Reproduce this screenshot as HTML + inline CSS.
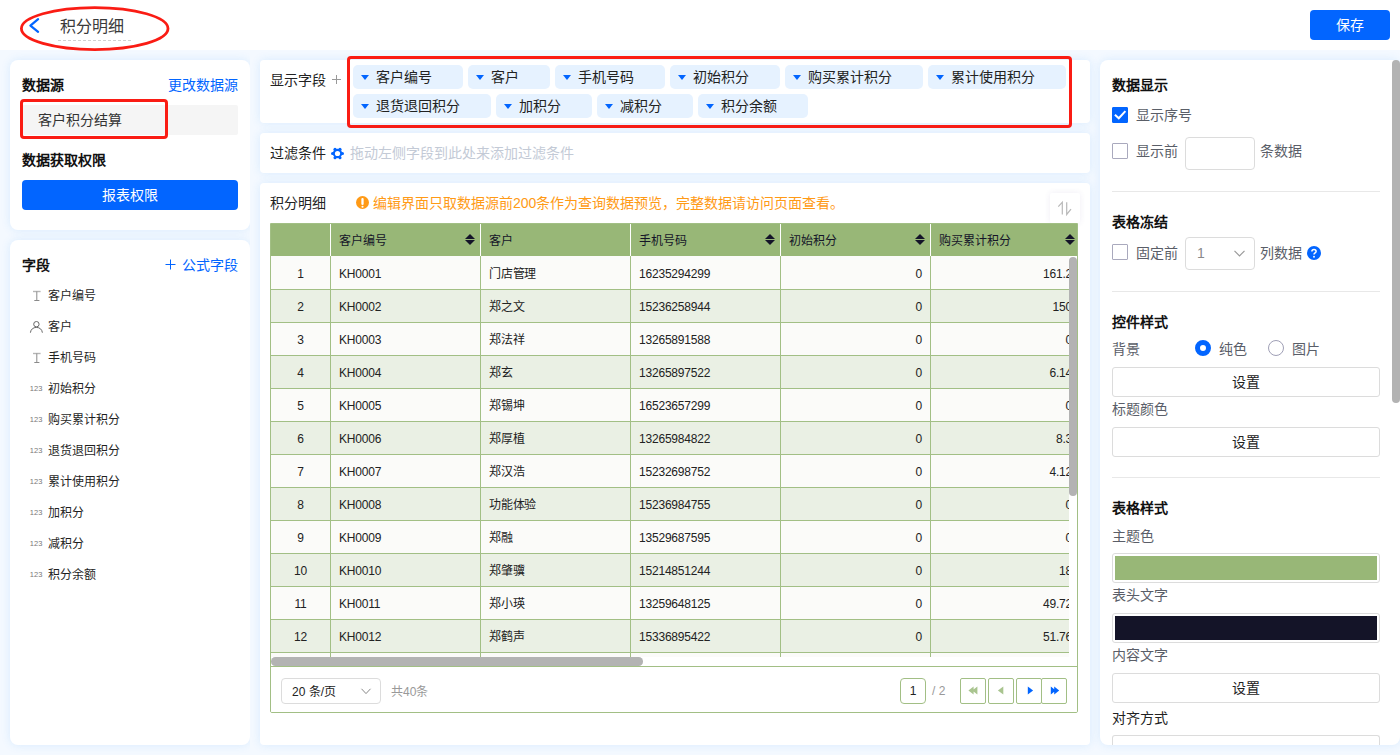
<!DOCTYPE html>
<html lang="zh-CN">
<head>
<meta charset="utf-8">
<title>积分明细</title>
<style>
*{box-sizing:border-box;margin:0;padding:0}
html,body{width:1400px;height:755px;overflow:hidden}
body{font-family:"Liberation Sans",sans-serif;font-size:14px;color:#1f1f1f;background:#f4f9ff;position:relative}
.a{position:absolute;white-space:nowrap}
.card{position:absolute;background:#fff;border-radius:8px;box-shadow:0 0 10px rgba(50,150,250,0.14)}
.lc{clip-path:inset(-20px 0 -20px -20px)}
.pan{position:absolute;background:#fff;border-radius:4px;box-shadow:0 0 10px rgba(50,150,250,0.14)}
.b{font-weight:bold;color:#111}
.blue{color:#0265ff}
.t14{font-size:14px;line-height:20px;height:20px}
.t12{font-size:12px;line-height:18px;height:18px}
svg{position:absolute;overflow:visible}
i{font-style:normal}
#hdr{left:0;top:0;width:1400px;height:50px;background:#fff;z-index:2}
.z3{z-index:3}
#save{left:1310px;top:10px;width:80px;height:30px;background:#0265ff;border-radius:4px;color:#fff;text-align:center;line-height:30px;font-size:14px}
.red{position:absolute;border:3px solid #fa1c14;border-radius:4px}
.fld{left:48px;font-size:12px;line-height:18px;height:18px;color:#1f1f1f}
.n123{left:29.8px;font-size:7.5px;line-height:10px;height:10px;color:#777;letter-spacing:0.1px}
.chip{position:absolute;height:24px;background:#e6f2ff;border-radius:5px;font-size:14px;line-height:24px;padding-left:23px;color:#222;white-space:nowrap;overflow:hidden}
.chip:before{content:"";position:absolute;left:8px;top:10px;border-left:4.5px solid transparent;border-right:4.5px solid transparent;border-top:5px solid #0265ff}
#tbl{left:270px;top:223px;width:808px;height:490px;border:1px solid #a2bf85;border-radius:0 0 2px 2px;overflow:hidden;background:#fff}
.th{position:absolute;top:-1px;height:33px;background:#98b777;font-size:12px;line-height:37px;color:#141428;padding-left:8px;white-space:nowrap;border-left:1px solid #fff;overflow:hidden}
.row{position:absolute;left:0;width:798px;height:33px;border-bottom:1px solid #a2bf85;background:#fbfbf9;font-size:12px;line-height:34px;color:#222;overflow:hidden;letter-spacing:-0.2px}
.row.e{background:#eaf0e4}
.row span{position:absolute;top:0;bottom:0;border-left:1px solid #a2bf85;padding:0 8px;white-space:nowrap;overflow:hidden}
.row span.c0{left:0;width:59px;border-left:0;text-align:center;padding:0}
.row span.c1{left:59px;width:150px}
.row span.c2{left:209px;width:150px}
.row span.c3{left:359px;width:150px}
.row span.c4{left:509px;width:150px;text-align:right}
.row span.c5{left:659px;width:150px;text-align:right}
.sort{position:absolute;right:5px;top:10.5px;width:10px;height:12px}
.sort:before{content:"";position:absolute;left:0;top:0;border-left:5px solid transparent;border-right:5px solid transparent;border-bottom:5.5px solid #141428}
.sort:after{content:"";position:absolute;left:0;top:6.5px;border-left:5px solid transparent;border-right:5px solid transparent;border-top:5.5px solid #141428}
.pg{position:absolute;top:454px;width:26px;height:26px;border:1px solid #a2bf85;background:#fff;border-radius:2px}
.g{color:#5a5e68}
.cb{position:absolute;left:1112px;width:16px;height:16px;border:1px solid #a9a9bd;background:#fff;border-radius:1px}
.btn{position:absolute;left:1112px;width:268px;height:30px;border:1px solid #dcdcdc;border-radius:3px;background:#fff;text-align:center;line-height:28px;font-size:14px;color:#222}
.hr{position:absolute;left:1112px;width:268px;height:1px;background:#e8e8e8}
.inp{position:absolute;left:1185px;width:70px;height:33px;border:1px solid #dcdcdc;border-radius:4px;background:#fff}
.sw{position:absolute;left:1112px;width:268px;height:30px;border:1px solid #dcdcdc;border-radius:3px;background:#fff;padding:2px}
.sw i{display:block;width:100%;height:100%}

</style>
</head>
<body>
<!-- HEADER -->
<div class="a" id="hdr"></div>
<svg class="z3" style="left:0;top:0" width="200" height="60"><polyline points="38.1,19.2 30.4,25.55 38.1,31.9" fill="none" stroke="#0265ff" stroke-width="2.2" stroke-linecap="round" stroke-linejoin="round"/><line x1="58" y1="40.5" x2="131" y2="40.5" stroke="#d0d0d0" stroke-width="1" stroke-dasharray="3,2"/><ellipse cx="94.7" cy="28.6" rx="73.3" ry="21" fill="none" stroke="#fa1c14" stroke-width="2.8"/></svg>
<div class="a z3" style="left:60px;top:15px;font-size:16px;line-height:24px;color:#3a3a3a">积分明细</div>
<div class="a z3" id="save">保存</div>

<!-- LEFT CARD 1 -->
<div class="card lc" style="left:10px;top:60px;width:240px;height:170px"></div>
<div class="a t14 b" style="left:22px;top:75px">数据源</div>
<div class="a t14 blue" style="right:1162px;top:75px">更改数据源</div>
<div class="a" style="left:22px;top:105px;width:216px;height:30px;background:#f5f5f5;border-radius:2px;padding-left:16px;line-height:30px;color:#333">客户积分结算</div>
<div class="red" style="left:19.5px;top:98.5px;width:148.5px;height:40.5px"></div>
<div class="a t14 b" style="left:22px;top:150px">数据获取权限</div>
<div class="a" style="left:22px;top:180px;width:216px;height:30px;background:#0265ff;border-radius:4px;color:#fff;text-align:center;line-height:30px">报表权限</div>

<!-- LEFT CARD 2 -->
<div class="card lc" style="left:10px;top:240px;width:240px;height:505px"></div>
<div class="a t14 b" style="left:22px;top:255px">字段</div>
<div class="a t14 blue" style="right:1162px;top:255px">公式字段</div>
<svg style="left:165px;top:259px" width="12" height="12"><path d="M5.5 0.5v10M0.5 5.5h10" stroke="#0265ff" stroke-width="1" fill="none"/></svg>
<div class="a fld" style="top:287px">客户编号</div>
<svg style="left:32.8px;top:291.1px" width="8" height="11"><path d="M0 0.5h7.6" stroke="#b5b5b5" stroke-width="1.4" fill="none"/><path d="M3.8 0.5v9M1.3 9.5h5.1" stroke="#8a8a8a" stroke-width="1" fill="none"/></svg>
<div class="a fld" style="top:318px">客户</div>
<svg style="left:30px;top:321px" width="12" height="12"><circle cx="6.4" cy="3.2" r="2.7" fill="none" stroke="#666" stroke-width="1"/><path d="M0.4 11.7c0.4-3.4 2.8-5.3 6-5.3s5.6 1.9 6 5.3" fill="none" stroke="#666" stroke-width="1"/></svg>
<div class="a fld" style="top:349px">手机号码</div>
<svg style="left:32.8px;top:353.1px" width="8" height="11"><path d="M0 0.5h7.6" stroke="#b5b5b5" stroke-width="1.4" fill="none"/><path d="M3.8 0.5v9M1.3 9.5h5.1" stroke="#8a8a8a" stroke-width="1" fill="none"/></svg>
<div class="a fld" style="top:380px">初始积分</div>
<div class="a n123" style="top:384px">123</div>
<div class="a fld" style="top:411px">购买累计积分</div>
<div class="a n123" style="top:415px">123</div>
<div class="a fld" style="top:442px">退货退回积分</div>
<div class="a n123" style="top:446px">123</div>
<div class="a fld" style="top:473px">累计使用积分</div>
<div class="a n123" style="top:477px">123</div>
<div class="a fld" style="top:504px">加积分</div>
<div class="a n123" style="top:508px">123</div>
<div class="a fld" style="top:535px">减积分</div>
<div class="a n123" style="top:539px">123</div>
<div class="a fld" style="top:566px">积分余额</div>
<div class="a n123" style="top:570px">123</div>

<!-- MIDDLE: display fields -->
<div class="pan" style="left:260px;top:60px;width:830px;height:63px"></div>
<div class="a t14" style="left:270px;top:70px;color:#222">显示字段</div>
<svg style="left:332px;top:75px" width="10" height="10"><path d="M4.5 0v9M0 4.5h9" stroke="#999" stroke-width="1" fill="none"/></svg>
<div class="chip" style="left:353px;top:65px;width:110px">客户编号</div>
<div class="chip" style="left:468px;top:65px;width:82px">客户</div>
<div class="chip" style="left:555px;top:65px;width:110px">手机号码</div>
<div class="chip" style="left:670px;top:65px;width:110px">初始积分</div>
<div class="chip" style="left:785px;top:65px;width:138px">购买累计积分</div>
<div class="chip" style="left:928px;top:65px;width:138px">累计使用积分</div>
<div class="chip" style="left:353px;top:94px;width:138px">退货退回积分</div>
<div class="chip" style="left:496px;top:94px;width:96px">加积分</div>
<div class="chip" style="left:597px;top:94px;width:96px">减积分</div>
<div class="chip" style="left:698px;top:94px;width:110px">积分余额</div>
<div class="red" style="left:347px;top:55.5px;width:725px;height:72px"></div>

<!-- MIDDLE: filter -->
<div class="pan" style="left:260px;top:133px;width:830px;height:40px"></div>
<div class="a t14" style="left:270px;top:143px;color:#222">过滤条件</div>
<svg style="left:331px;top:146.7px" width="13" height="13" viewBox="0 0 13 13"><g fill="#0265ff"><circle cx="6.5" cy="6.5" r="4.7"/><circle cx="11.45" cy="6.50" r="1.55"/><circle cx="8.98" cy="10.79" r="1.55"/><circle cx="4.03" cy="10.79" r="1.55"/><circle cx="1.55" cy="6.50" r="1.55"/><circle cx="4.02" cy="2.21" r="1.55"/><circle cx="8.98" cy="2.21" r="1.55"/></g><circle cx="6.5" cy="6.5" r="2.6" fill="#fff"/></svg>
<div class="a t14" style="left:350px;top:143px;color:#c3cad6">拖动左侧字段到此处来添加过滤条件</div>

<!-- MIDDLE: table panel -->
<div class="pan" style="left:260px;top:183px;width:830px;height:562px"></div>
<div class="a t14" style="left:270px;top:193px;color:#222">积分明细</div>
<svg style="left:356.2px;top:196.1px" width="13" height="13" viewBox="0 0 13 13"><circle cx="6.5" cy="6.5" r="6.5" fill="#ff9a16"/><rect x="5.35" y="2" width="2.3" height="6.9" rx="1" fill="#fff"/><circle cx="6.5" cy="10.7" r="1.05" fill="#fff"/></svg>
<div class="a" style="left:373px;top:193px;font-size:14px;line-height:20px;color:#ff9a16">编辑界面只取数据源前200条作为查询数据预览，完整数据请访问页面查看。</div>
<div class="a" style="left:1050px;top:193px;width:30px;height:30px;background:#fff;border-radius:2px;box-shadow:0 0 6px rgba(80,60,140,0.09)"></div>
<svg style="left:1050px;top:193px" width="30" height="30"><path d="M12.3 21.5V9.2L8.3 13.6M16.7 9.2V21.5L21 16.2" fill="none" stroke="#b8b8b8" stroke-width="1.2"/></svg>
<div class="a" id="tbl">
<div class="th" style="left:-1px;width:60px;border-left:0"></div>
<div class="th" style="left:59px;width:150px">客户编号<i class="sort"></i></div>
<div class="th" style="left:209px;width:150px">客户</div>
<div class="th" style="left:359px;width:150px">手机号码<i class="sort"></i></div>
<div class="th" style="left:509px;width:150px">初始积分<i class="sort"></i></div>
<div class="th" style="left:659px;width:150px">购买累计积分<i class="sort"></i></div>
<div class="row" style="top:32px;height:34px;line-height:36px"><span class="c0">1</span><span class="c1">KH0001</span><span class="c2">门店管理</span><span class="c3">16235294299</span><span class="c4">0</span><span class="c5">161.2</span></div>
<div class="row e" style="top:66px"><span class="c0">2</span><span class="c1">KH0002</span><span class="c2">郑之文</span><span class="c3">15236258944</span><span class="c4">0</span><span class="c5">150</span></div>
<div class="row" style="top:99px"><span class="c0">3</span><span class="c1">KH0003</span><span class="c2">郑法祥</span><span class="c3">13265891588</span><span class="c4">0</span><span class="c5">0</span></div>
<div class="row e" style="top:132px"><span class="c0">4</span><span class="c1">KH0004</span><span class="c2">郑玄</span><span class="c3">13265897522</span><span class="c4">0</span><span class="c5">6.14</span></div>
<div class="row" style="top:165px"><span class="c0">5</span><span class="c1">KH0005</span><span class="c2">郑锡坤</span><span class="c3">16523657299</span><span class="c4">0</span><span class="c5">0</span></div>
<div class="row e" style="top:198px"><span class="c0">6</span><span class="c1">KH0006</span><span class="c2">郑厚植</span><span class="c3">13265984822</span><span class="c4">0</span><span class="c5">8.3</span></div>
<div class="row" style="top:231px"><span class="c0">7</span><span class="c1">KH0007</span><span class="c2">郑汉浩</span><span class="c3">15232698752</span><span class="c4">0</span><span class="c5">4.12</span></div>
<div class="row e" style="top:264px"><span class="c0">8</span><span class="c1">KH0008</span><span class="c2">功能体验</span><span class="c3">15236984755</span><span class="c4">0</span><span class="c5">0</span></div>
<div class="row" style="top:297px"><span class="c0">9</span><span class="c1">KH0009</span><span class="c2">郑融</span><span class="c3">13529687595</span><span class="c4">0</span><span class="c5">0</span></div>
<div class="row e" style="top:330px"><span class="c0">10</span><span class="c1">KH0010</span><span class="c2">郑肇骥</span><span class="c3">15214851244</span><span class="c4">0</span><span class="c5">18</span></div>
<div class="row" style="top:363px"><span class="c0">11</span><span class="c1">KH0011</span><span class="c2">郑小瑛</span><span class="c3">13259648125</span><span class="c4">0</span><span class="c5">49.72</span></div>
<div class="row e" style="top:396px"><span class="c0">12</span><span class="c1">KH0012</span><span class="c2">郑鹤声</span><span class="c3">15336895422</span><span class="c4">0</span><span class="c5">51.76</span></div>
<div class="row" style="top:429px"><span class="c0">13</span><span class="c1">KH0013</span><span class="c2">郑天挺</span><span class="c3">13265984711</span><span class="c4">0</span><span class="c5">12.5</span></div>
<div class="a" style="left:798px;top:32px;width:8px;height:401px;background:#fff"></div>
<div class="a" style="left:798px;top:33px;width:7.7px;height:238.6px;background:#b3b3b3;border-radius:4px"></div>
<div class="a" style="left:0;top:433px;width:806px;height:56px;background:#fff"></div>
<div class="a" style="left:0;top:433px;width:372px;height:8.6px;background:#b3b3b3;border-radius:4.3px"></div>
<div class="a" style="left:0;top:442px;width:806px;height:1px;background:#a2bf85"></div>
<div class="a" style="left:10px;top:454px;width:100px;height:26px;border:1px solid #dcdcdc;border-radius:4px;padding-left:10px;font-size:12px;line-height:26px;color:#222">20 条/页</div>
<svg style="left:90px;top:464px" width="10" height="7"><path d="M0.5 0.8L5 5.6L9.5 0.8" fill="none" stroke="#888" stroke-width="1"/></svg>
<div class="a" style="left:120px;top:454px;font-size:12px;line-height:29px;color:#999">共40条</div>
<div class="pg" style="left:629px;border-radius:4px;text-align:center;font-size:12px;line-height:24px;color:#222">1</div>
<div class="a" style="left:661px;top:454px;font-size:12px;line-height:26px;color:#999">/ 2</div>
<div class="pg" style="left:689px"></div>
<div class="pg" style="left:717px"></div>
<div class="pg" style="left:745px"></div>
<div class="pg" style="left:770px"></div>
<svg style="left:689px;top:454px" width="110" height="26"><path d="M13.6 8.5v8l-5.2-4zM17.4 8.5v8l-5.2-4z" fill="#a9c48f"/><path d="M43.3 8.5v8l-5.4-4z" fill="#a9c48f"/><path d="M67.8 8.5v8l5.3-4z" fill="#0265ff"/><path d="M90.8 8.5v8l5-4zM94.2 8.5v8l5-4z" fill="#0265ff"/></svg>
</div>

<!-- RIGHT PANEL -->
<div class="card" style="left:1100px;top:60px;width:300px;height:685px"></div>
<div class="a" style="left:1392px;top:60px;width:8px;height:343px;background:#b3b3b3;border-radius:4px"></div>
<div class="a t14 b" style="left:1112px;top:75px">数据显示</div>
<div class="cb" style="top:107px;background:#0265ff;border-color:#0265ff"></div>
<svg style="left:1112px;top:107px" width="16" height="16"><path d="M2.9 7.7L6.8 11.3L13.4 4.1" fill="none" stroke="#fff" stroke-width="2"/></svg>
<div class="a t14 g" style="left:1136px;top:105px">显示序号</div>
<div class="cb" style="top:143px"></div>
<div class="a t14 g" style="left:1136px;top:141px">显示前</div>
<div class="inp" style="top:137px"></div>
<div class="a t14 g" style="left:1260px;top:141px">条数据</div>
<div class="hr" style="top:191px"></div>

<div class="a t14 b" style="left:1112px;top:212px">表格冻结</div>
<div class="cb" style="top:244px"></div>
<div class="a t14 g" style="left:1136px;top:243px">固定前</div>
<div class="inp" style="top:237px;padding-left:11px;line-height:31px;color:#8a8a8a;font-size:14px">1</div>
<svg style="left:1234px;top:250px" width="11" height="7"><path d="M0.5 0.8L5.5 5.8L10.5 0.8" fill="none" stroke="#999" stroke-width="1.2"/></svg>
<div class="a t14 g" style="left:1260px;top:243px">列数据</div>
<svg style="left:1307px;top:246px" width="14" height="14" viewBox="0 0 14 14"><circle cx="7" cy="7" r="7" fill="#0265ff"/><path d="M4.9 5.6c0-1.3 0.9-2.1 2.1-2.1s2.1 0.8 2.1 1.9c0 1.5-2.1 1.6-2.1 3.2" fill="none" stroke="#fff" stroke-width="1.5"/><circle cx="7" cy="10.7" r="0.95" fill="#fff"/></svg>
<div class="hr" style="top:291px"></div>

<div class="a t14 b" style="left:1112px;top:312px">控件样式</div>
<div class="a t14 g" style="left:1112px;top:339px">背景</div>
<div class="a" style="left:1195px;top:340px;width:16px;height:16px;border-radius:50%;border:5px solid #0265ff;background:#fff"></div>
<div class="a t14 g" style="left:1219px;top:339px">纯色</div>
<div class="a" style="left:1268px;top:340px;width:16px;height:16px;border-radius:50%;border:1px solid #9f9fb6;background:#fff"></div>
<div class="a t14 g" style="left:1292px;top:339px">图片</div>
<div class="btn" style="top:367px">设置</div>
<div class="a t14 g" style="left:1112px;top:399px">标题颜色</div>
<div class="btn" style="top:427px">设置</div>
<div class="hr" style="top:477px"></div>

<div class="a t14 b" style="left:1112px;top:498px">表格样式</div>
<div class="a t14 g" style="left:1112px;top:526px">主题色</div>
<div class="sw" style="top:553px"><i style="background:#98b777"></i></div>
<div class="a t14 g" style="left:1112px;top:585px">表头文字</div>
<div class="sw" style="top:613px"><i style="background:#141428"></i></div>
<div class="a t14 g" style="left:1112px;top:645px">内容文字</div>
<div class="btn" style="top:673px">设置</div>
<div class="a t14" style="left:1112px;top:708px;color:#222">对齐方式</div>
<div class="a" style="left:1112px;top:735px;width:268px;height:10px;border:1px solid #dcdcdc;border-bottom:0;border-radius:3px 3px 0 0;background:#fff"></div>
</body>
</html>
